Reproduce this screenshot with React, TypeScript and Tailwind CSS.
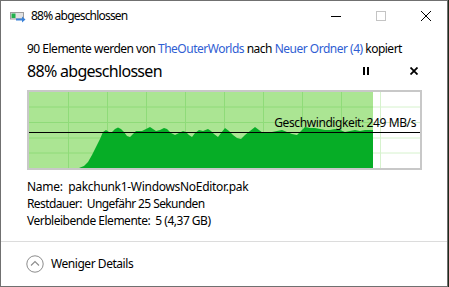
import React from "react";

const font = { fontFamily: '"Noto Sans", "Open Sans", sans-serif' };

const pts =
  "79,168 84,166 88,162 92,155 96,147 100,139 103,132 106,130 109,132 112,132 115,129 118,127.5 121,129 124,132 127,136 130,137 133,134 136,131 139,131 142,131 146,129 150,127 153,129 156,131 160,130 164,128 167,129 171,133 175,135 179,133 183,131 186,132 189,135 192,137 195,133 199,130 203,131 208,129 211,131 214,134 218,137 221,133 225,128 229,131 233,135 237,138 241,139 245,135 250,131 255,127 259,130 263,133 268,133 272,132 277,131 282,130 287,132 292,134 297,135 301,131 305,127 310,128 315,128 320,129 325,130 330,130 335,129 340,130 345,132 350,131 355,130 360,131 365,130 370,130 373,130 373,168";

function Chart() {
  const vx = [68, 107, 146, 185, 224, 263, 302, 341, 380];
  const hy = [107, 122.5, 138, 153];
  return (
    <div className="relative w-[395px] h-[80px] border-2 border-[#c8c8c8] bg-white">
      <svg width="391" height="76" viewBox="29 92 391 76" className="block">
        <rect x="29" y="92" width="344" height="76" fill="#abe593" />
        {vx.map((x) => (
          <line key={x} x1={x + 0.5} y1="92" x2={x + 0.5} y2="168" stroke={x < 373 ? "#8fdb79" : "#d6f2cd"} strokeWidth="1" />
        ))}
        {hy.map((y) => (
          <g key={y}>
            <line x1="29" y1={y} x2="373" y2={y} stroke="#8fdb79" strokeWidth="1" />
            <line x1="373" y1={y} x2="420" y2={y} stroke="#d6f2cd" strokeWidth="1" />
          </g>
        ))}
        <polygon points={pts} fill="#06ad26" />
        <line x1="29" y1="132.5" x2="420" y2="132.5" stroke="#000" strokeWidth="1.2" />
      </svg>
      <span className="absolute right-[4px] top-[23px] text-[12px] leading-[16px] tracking-[-0.4px] text-black" style={font}>
        Geschwindigkeit: 249 MB/s
      </span>
    </div>
  );
}

export default function App() {
  return (
    <div className="w-[449px] h-[287px] bg-[#1e2a1a] flex">
      <div className="w-[448px] h-[287px] border border-[#707070] bg-white flex flex-col text-black" style={font}>
        {/* title bar */}
        <div className="h-[30px] flex items-center shrink-0">
          <svg width="16" height="11" viewBox="0 0 16 11" className="ml-[9px] mt-[2px]">
            <rect x="0.5" y="0.5" width="13" height="6.5" fill="#e2e2e2" stroke="#9c9c9c" />
            <rect x="1.5" y="1.5" width="4" height="4.5" fill="#22b14c" />
            <path d="M6 6.5 H12 V4.5 L15.5 7.5 L12 10.5 V8.5 H6 Z" fill="#3b82d8" />
          </svg>
          <span className="ml-[5px] text-[12px] leading-[16px] tracking-[-0.8px]">88% abgeschlossen</span>
          <div className="ml-auto flex items-center gap-[35px] pr-[16px]">
            <svg width="10" height="10" viewBox="0 0 10 10"><line x1="0" y1="5.5" x2="10" y2="5.5" stroke="#000" /></svg>
            <svg width="10" height="10" viewBox="0 0 10 10"><rect x="0.5" y="0.5" width="9" height="9" fill="none" stroke="#c4c4c4" /></svg>
            <svg width="10" height="10" viewBox="0 0 10 10"><path d="M0 0 L10 10 M10 0 L0 10" stroke="#000" strokeWidth="1" /></svg>
          </div>
        </div>
        {/* content */}
        <div className="pl-[26px] flex flex-col">
          <div className="mt-[10px] h-[16px] text-[12px] leading-[16px] tracking-[-0.5px] whitespace-nowrap">
            90 Elemente werden von <span className="text-[#2f5ed3]">TheOuterWorlds</span> nach{" "}
            <span className="text-[#2f5ed3]">Neuer Ordner (4)</span> kopiert
          </div>
          <div className="mt-[3px] h-[22px] flex items-center">
            <span className="text-[16px] leading-[22px] tracking-[-0.7px]">88% abgeschlossen</span>
            <div className="ml-auto flex items-center pr-[29px]">
              <svg width="6" height="8" viewBox="0 0 6 8"><rect x="0" y="0" width="2" height="8" fill="#000" /><rect x="4" y="0" width="2" height="8" fill="#000" /></svg>
              <svg width="8" height="8" viewBox="0 0 8 8" className="ml-[41px]"><path d="M0.5 0.5 L7.5 7.5 M7.5 0.5 L0.5 7.5" stroke="#000" strokeWidth="1.8" /></svg>
            </div>
          </div>
          <div className="mt-[8px]">
            <Chart />
          </div>
          <div className="mt-[8px] text-[12px] leading-[17px]">
            <div className="tracking-[-0.3px]">Name:&nbsp; pakchunk1-WindowsNoEditor.pak</div>
            <div className="tracking-[-0.6px]">Restdauer:&nbsp; Ungefähr 25 Sekunden</div>
            <div className="tracking-[-0.5px]">Verbleibende Elemente:&nbsp; 5 (4,37 GB)</div>
          </div>
        </div>
        <div className="mt-[12px] h-px bg-[#dcdcdc] shrink-0" />
        <div className="flex-1 flex items-center pl-[25px]">
          <svg width="18" height="18" viewBox="0 0 18 18">
            <circle cx="9" cy="9" r="8.2" fill="none" stroke="#8c8c8c" strokeWidth="1" />
            <path d="M5 10.5 L9 6.5 L13 10.5" fill="none" stroke="#8c8c8c" strokeWidth="1.1" />
          </svg>
          <span className="ml-[7px] text-[12px] leading-[16px] tracking-[-0.45px]">Weniger Details</span>
        </div>
      </div>
    </div>
  );
}
